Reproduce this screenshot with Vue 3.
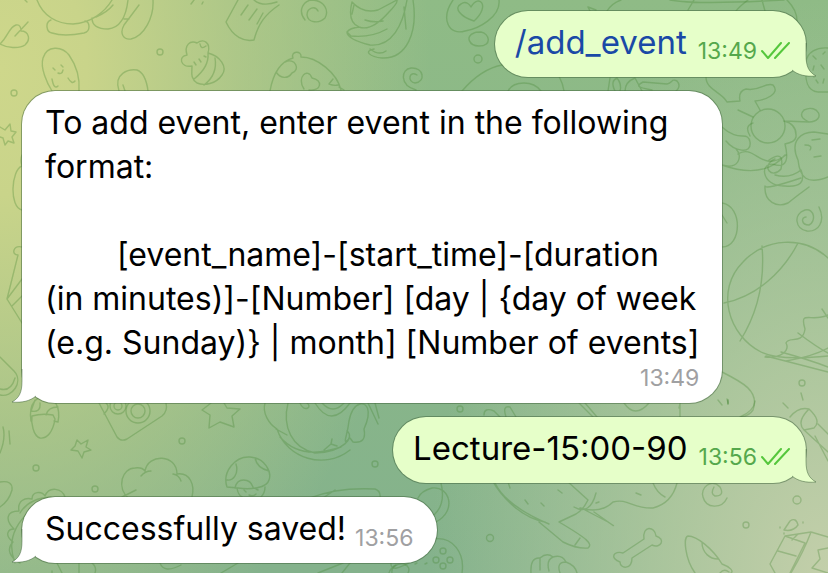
<script setup>
const messages = [
  { id: 1, own: true, command: '/add_event', time: '13:49' },
  {
    id: 2,
    own: false,
    long: true,
    text: 'To add event, enter event in the following\nformat:\n\n        [event_name]-[start_time]-[duration\n(in minutes)]-[Number] [day | {day of week\n(e.g. Sunday)} | month] [Number of events]',
    time: '13:49',
  },
  { id: 3, own: true, text: 'Lecture-15:00-90', time: '13:56' },
  { id: 4, own: false, text: 'Successfully saved!', time: '13:56' },
]
</script>

<template>
  <main class="chat">
    <svg class="wallpaper" viewBox="0 0 828 573" preserveAspectRatio="xMinYMin slice" aria-hidden="true">
      <!-- creature, leaf and peanuts -->
      <path d="M37 0C43 16 57 24 73 24C91 23 105 12 112 0M51 20C45 22 46 32 52 33C61 36 74 35 84 33C91 31 90 22 85 21M92 18C92 25 97 29 108 29C119 28 126 18 128 0M96 17C103 14 109 10 113 5M139 5L124 25C119 34 124 40 131 39C144 36 154 18 153 0M124 19H129M25 0L27 2" />
      <path d="M0 44C8 37 9 27 16 25C20 24 21 28 21 31C29 31 31 40 25 45C19 49 7 48 0 44M15 36L28 22" />
      <path d="M52 91C47 83 40 68 43 58C47 45 62 46 69 55C76 65 80 78 79 91M53 68L55 70M61 65L63 67M58 73Q62 75 63 70M52 79Q54 90 58 86M68 78Q72 85 75 81" />
      <path d="M119 91C113 73 129 69 137 70C145 73 147 83 148 91M123 85L125 91" />
      <circle cx="160" cy="52" r="3" /><circle cx="14" cy="93" r="3" />
      <!-- shell, brush and spiral -->
      <path d="M192 66C180 68 178 56 187 55C184 45 190 40 197 43C204 38 211 43 208 53C220 56 228 67 222 75C216 84 204 86 197 83C190 78 192 73 192 66M208 53C209 64 203 72 194 79M215 58C217 70 212 79 204 85M194 62L196 65M199 59L201 62M204 56L206 57M200 44Q201 50 206 46" />
      <path d="M238 0L226 22C233 37 244 42 254 40C258 25 264 15 279 5M254 0Q262 7 277 2M248 5L241 15M257 9L249 20M263 13L257 24M191 4L194 0M203 2L202 4" />
      <path d="M305 20C297 10 304 0 313 0C325 1 329 11 325 18C319 24 308 23 307 15C307 8 315 5 318 11" />
      <!-- bananas -->
      <path d="M352 2Q347 22 359 27C370 31 382 20 389 12Q398 3 397 0M352 2Q363 14 378 10L397 0M359 27Q350 28 347 32C347 38 358 42 370 45C392 47 403 25 407 0M347 32L351 36Q371 38 387 29M374 49C363 51 370 57 382 58C407 59 418 32 413 0M370 49Q379 56 386 51M354 5L352 14M404 7L406 29M365 20Q374 23 383 21" />
      <path d="M270 91Q275 63 293 58C290 51 302 50 301 57C317 57 337 73 341 90M276 72C281 79 288 79 292 73C301 70 295 57 285 62M304 89C296 77 308 67 312 78C323 80 322 91 309 90M333 79L329 84Q334 86 338 85M339 87L344 90" />
      <path d="M416 90C399 85 401 69 411 68C424 67 426 82 415 83C407 82 409 70 417 75" />
      <!-- thought bubble -->
      <path d="M453 0C440 19 449 36 465 31C478 29 501 17 499 0M474 21C461 17 453 8 461 4C466 0 470 5 471 7C479-7 491 6 474 21M474 33C465 36 469 46 479 46C493 46 489 33 481 32C477 32 475 32 474 33" />
      <circle cx="478" cy="59" r="4" /><path d="M462 91Q481 69 502 65M508 91Q512 83 524 83Q535 83 541 91M590 11L588 7L596 10M607 11Q612 3 621 0M694 0L688 10M670 0Q697 5 784 0M787 0Q797 10 797 21M762 0L765 11" />
      <path d="M551 66Q562 77 564 91M610 78L608 91M615 91Q610 81 617 78Q622 84 620 91M625 91Q625 82 635 78L642 91M652 90C642 88 633 87 643 82L667 84C673 83 671 78 677 81C684 89 671 94 667 99" />
      <!-- rolling animals -->
      <path d="M706 77C706 90 722 92 727 102L740 101Q738 91 746 89C759 92 765 82 773 85C781 94 765 100 755 101L760 110M738 110L753 117M750 136Q744 126 753 123M722 127C739 143 748 130 750 142C752 155 734 151 726 141M722 165C739 170 743 156 736 149M738 154C755 143 761 174 786 155M722 165Q764 180 785 155" />
      <circle cx="768" cy="126" r="17" />
      <path d="M784 121Q797 124 796 137Q795 142 785 144M784 121L809 122C827 121 818 103 804 110C797 117 807 121 809 122M785 144Q791 168 776 165C759 159 760 187 785 186Q808 188 801 170Q790 179 775 175M769 160Q785 149 781 169C772 180 760 166 775 159M798 160C789 140 802 132 814 132L828 134M798 160C800 178 807 185 828 177M801 178Q765 190 765 186C764 202 777 208 788 203Q798 195 809 187M805 145Q813 145 810 150M812 140L820 139M814 157L821 156" />
      <path d="M722 203C743 206 742 247 722 247M722 215L727 223M819 207C826 222 818 232 807 231C795 229 793 214 805 210C815 208 816 222 809 225C801 225 801 217 806 217" />
      <!-- burger -->
      <path d="M806 62C807 52 817 47 828 48M806 68C805 79 807 91 818 92H828M813 56L816 59M823 54L825 52M814 66L813 70M821 65L824 69M816 80L818 83M824 79L823 83M812 75L814 77" />
      <!-- ball and wings -->
      <path d="M828 258C803 235 765 238 743 262C715 290 728 335 761 352Q779 361 828 356M762 246C765 281 757 314 740 341M798 243C783 272 757 296 724 303M765 357C781 359 790 350 786 343C788 336 803 345 805 329C799 309 811 323 828 315M798 333Q818 348 828 353M781 352Q810 360 828 367M766 356L828 372M828 348Q814 356 786 361M822 309L828 318" />
      <path d="M722 372C742 382 760 391 753 410Q749 416 741 417M727 399L728 403M801 393L803 400M783 403L788 408M748 0Q740 6 736 11" />
      <circle cx="802" cy="383" r="3" />
      <path d="M790 417C798 407 805 408 809 409Q822 421 814 428L804 430Q796 422 809 409M804 430L828 452M818 424L828 434M815 436L828 461M718 400L722 405M728 400L728 404" />
      <!-- left edge -->
      <path d="M0 127L5 130L10 124L11 131L16 132L12 137L14 143L8 141L5 145L3 138L0 137M22 155Q20 160 22 166C11 170 9 207 22 210M22 247C13 245 11 255 18 255L7 299L22 323M7 299L22 279M12 306L22 296M0 357L14 371C24 382 12 398 0 395M0 389Q11 392 15 378M3 427Q6 438 0 453M9 431L10 444M0 482Q13 480 12 490Q9 501 0 507" />
      <!-- acorn, star and camera -->
      <path d="M31 421C28 402 38 396 46 397C54 397 61 407 58 422L54 421M32 416Q42 413 53 415L55 419C53 432 47 439 40 438C33 436 31 422 32 416M35 400L31 411Q41 413 40 403M46 415Q48 407 58 407" />
      <path d="M77 440L81 444L88 440L86 447L91 450L84 452L82 458L78 451L71 450L75 446Z" />
      <circle cx="36" cy="468" r="3" /><circle cx="95" cy="489" r="3" /><circle cx="182" cy="441" r="3" />
      <path d="M99 403L117 437Q121 442 127 439L162 416Q168 411 166 403M104 414Q111 407 106 403" />
      <circle cx="118" cy="406" r="8" /><circle cx="118" cy="406" r="4" /><circle cx="138" cy="411" r="12" /><circle cx="138" cy="411" r="7" />
      <!-- fluffy cloud and dinosaur edge -->
      <path d="M129 499C116 487 122 468 135 468Q142 467 145 471C148 453 177 454 177 474C190 472 195 485 192 497M141 476Q145 471 151 471M173 474Q179 475 181 481M122 497L136 490" />
      <path d="M20 563C10 558 6 549 13 542C4 535 8 529 14 529C5 520 6 511 19 511C17 501 25 497 32 499C32 491 42 491 45 496C49 486 62 488 65 497M30 511C12 527 8 545 15 563M20 513Q29 498 51 497M57 563L62 573M79 563V573M92 563Q97 567 95 573M160 563Q164 574 181 565M52 571V573" />
      <!-- star, mushroom and jumping creature -->
      <path d="M211 403L202 410L210 415L209 428L220 422L234 427L232 416L240 409L227 408L224 403" />
      <path d="M227 487C222 472 235 456 250 457C265 458 272 472 269 480C267 488 250 490 238 488ZM236 464C239 474 233 481 227 480M255 458Q257 468 269 471M235 488C237 477 250 478 253 487M237 488Q238 495 242 497M265 487Q265 493 261 497M244 490L246 492M256 489L258 490M249 495Q253 497 256 494" />
      <path d="M265 403C262 413 269 424 277 429C287 459 325 470 350 450M288 403C282 427 292 448 315 453C344 452 355 437 347 431M300 403C304 413 313 407 307 403M315 403Q331 429 350 403M322 403Q333 415 344 403M350 438C341 446 347 439 349 421Q352 406 360 404C366 403 373 409 364 429Q367 444 353 442ZM276 429L287 435M332 439L331 444L324 450M331 444L337 446M280 437Q301 461 341 447M368 403L378 424M375 403L379 418" />
      <circle cx="375" cy="464" r="3" /><circle cx="460" cy="409" r="3" />
      <path d="M310 498Q338 487 375 489Q381 491 380 498M335 490L323 498M238 563L221 573M343 563L318 573M350 563L342 573M392 573C391 567 397 563 404 564Q411 567 408 573" />
      <!-- fox and gamepad -->
      <path d="M484 415Q484 407 494 411L500 417M506 417Q502 405 510 407L516 417M579 403L593 417M585 403L597 417M492 480C502 498 522 518 545 522M495 483Q506 506 549 524M539 522L563 542Q577 549 588 548C593 544 588 539 559 522L576 514Q583 510 588 500L567 481M574 507Q590 516 596 493M580 508Q601 514 613 502C628 498 633 509 653 508Q672 503 677 483M594 512L611 524Q617 528 608 522L585 510M575 545L580 538M508 482L510 488M525 500L528 504M541 503L544 506M558 490L562 493M653 483Q657 493 665 497M636 493L641 495M596 503L599 502" />
      <path d="M441 483Q446 504 434 515M436 522C457 511 450 486 432 488Q421 491 418 498M391 563C390 573 403 566 409 563M433 539C453 536 465 553 462 573M389 573Q391 567 396 565" />
      <circle cx="443" cy="551" r="3" /><circle cx="436" cy="560" r="3" /><circle cx="450" cy="560" r="3" /><circle cx="443" cy="566" r="3" /><circle cx="490" cy="538" r="3.5" />
      <path d="M531 573Q530 557 540 558Q547 552 553 557Q562 554 566 562Q575 565 577 573M540 558V570M553 557Q546 560 549 571M566 562Q556 562 560 573M415 564L417 563M425 564L427 563" />
      <!-- lower right scene -->
      <path d="M720 487C711 478 700 488 703 497C706 509 722 509 727 498M720 487Q725 496 715 496Q710 494 714 487M679 408Q681 400 680 403V417M624 403Q635 419 649 403M728 400V404M740 417Q754 411 755 401" />
      <path d="M623 553L644 539C642 525 655 526 656 536C666 539 661 549 652 545L632 558C632 570 620 569 620 562C609 558 614 550 623 553Z" />
      <circle cx="746" cy="525" r="3" /><circle cx="797" cy="500" r="4" />
      <path d="M695 573C685 559 683 537 688 536C697 536 713 549 722 564C730 567 734 571 731 573M702 542C702 553 710 559 718 559M720 573Q724 568 729 572" />
      <path d="M784 530L790 521Q796 517 798 525Q793 532 784 530M775 573L770 564L785 536L811 532L828 537M785 536L805 543L790 573M778 551L796 556M798 534L792 540M811 532Q804 551 791 573M828 548L818 550L820 559L812 568L828 573M780 527V528M784 533V534M803 522V523" />
    </svg>

    <section class="messages" aria-label="Conversation">
      <article
        v-for="message in messages"
        :key="message.id"
        class="bubble"
        :class="{ own: message.own, long: message.long }"
      >
        <p class="body"><a v-if="message.command" class="command" href="#">{{ message.command }}</a><template v-else>{{ message.text }}</template></p>
        <div class="meta">
          <time>{{ message.time }}</time>
          <svg v-if="message.own" class="checks" width="29" height="18" viewBox="0 0 29 18" role="img" aria-label="Read">
            <path d="M1 9L7 16L20 1M14 16L28 1" />
          </svg>
        </div>
        <svg class="tail" width="37" height="36" viewBox="0 0 37 36" aria-hidden="true">
          <path class="tail-fill" d="M12 27C18 32 26 34 36 33C29 29 26 24 26 12V0H8V27Z" />
          <path class="tail-line" d="M12 27C18 32 26 34 36 33C29 29 26 24 26 12V0" />
        </svg>
      </article>
    </section>
  </main>
</template>

<style>
body {
  margin: 0;
}
</style>

<style scoped>
.chat {
  position: relative;
  min-height: 100vh;
  overflow: hidden;
  box-sizing: border-box;
  padding: 11px 22px 10px;
  font-family: Inter, "Liberation Sans", sans-serif;
  background:
    radial-gradient(ellipse 52% 110% at 0 12%, #ced78b 0%, #c9d48a 20%, rgba(190, 206, 137, 0.65) 55%, rgba(139, 184, 134, 0) 100%),
    radial-gradient(ellipse 48% 100% at 100% 100%, #c3cfaa 0%, rgba(184, 204, 163, 0.75) 40%, rgba(139, 184, 134, 0) 100%),
    linear-gradient(#8fbb86, #84b28c);
}

.wallpaper {
  position: absolute;
  inset: 0;
  width: 100%;
  height: 100%;
  fill: none;
  stroke: #44852f;
  stroke-opacity: 0.31;
  stroke-width: 1.4;
  stroke-linecap: round;
  stroke-linejoin: round;
}

.messages {
  position: relative;
  display: flex;
  flex-direction: column;
  align-items: flex-start;
  gap: 14px;
}

.bubble {
  --surface: #ffffff;
  --meta: #a0a0a2;
  position: relative;
  display: flex;
  align-items: flex-end;
  gap: 9px;
  box-sizing: border-box;
  max-width: 92%;
  padding: 10px 23px 12px;
  border-radius: 33px;
  background: var(--surface);
  box-shadow: 0 0 0 1px rgba(62, 98, 58, 0.5);
  font-size: 32px;
}

.bubble.own {
  --surface: #e6ffc9;
  --meta: #55a84c;
  align-self: flex-end;
  gap: 11px;
  padding: 9px 16px 13px 20px;
  font-size: 33px;
}

.bubble.long {
  flex-direction: column;
  gap: 0;
}

.body {
  margin: 0;
  line-height: 44px;
  color: #000000;
  white-space: pre-wrap;
}

.command {
  color: #1a49a6;
  text-decoration: none;
}

.meta {
  display: flex;
  align-items: center;
  gap: 4px;
  position: relative;
  z-index: 1;
  font-size: 23px;
  line-height: 26px;
  color: var(--meta);
}

.checks {
  fill: none;
  stroke: #55c73c;
  stroke-width: 2;
  stroke-linecap: round;
  stroke-linejoin: round;
}

.tail {
  position: absolute;
  left: -11px;
  bottom: -2px;
  transform: scaleX(-1);
}

.own .tail {
  left: auto;
  right: -11px;
  transform: none;
}

.tail-fill {
  fill: var(--surface);
}

.tail-line {
  fill: none;
  stroke: rgba(62, 98, 58, 0.5);
}
</style>
